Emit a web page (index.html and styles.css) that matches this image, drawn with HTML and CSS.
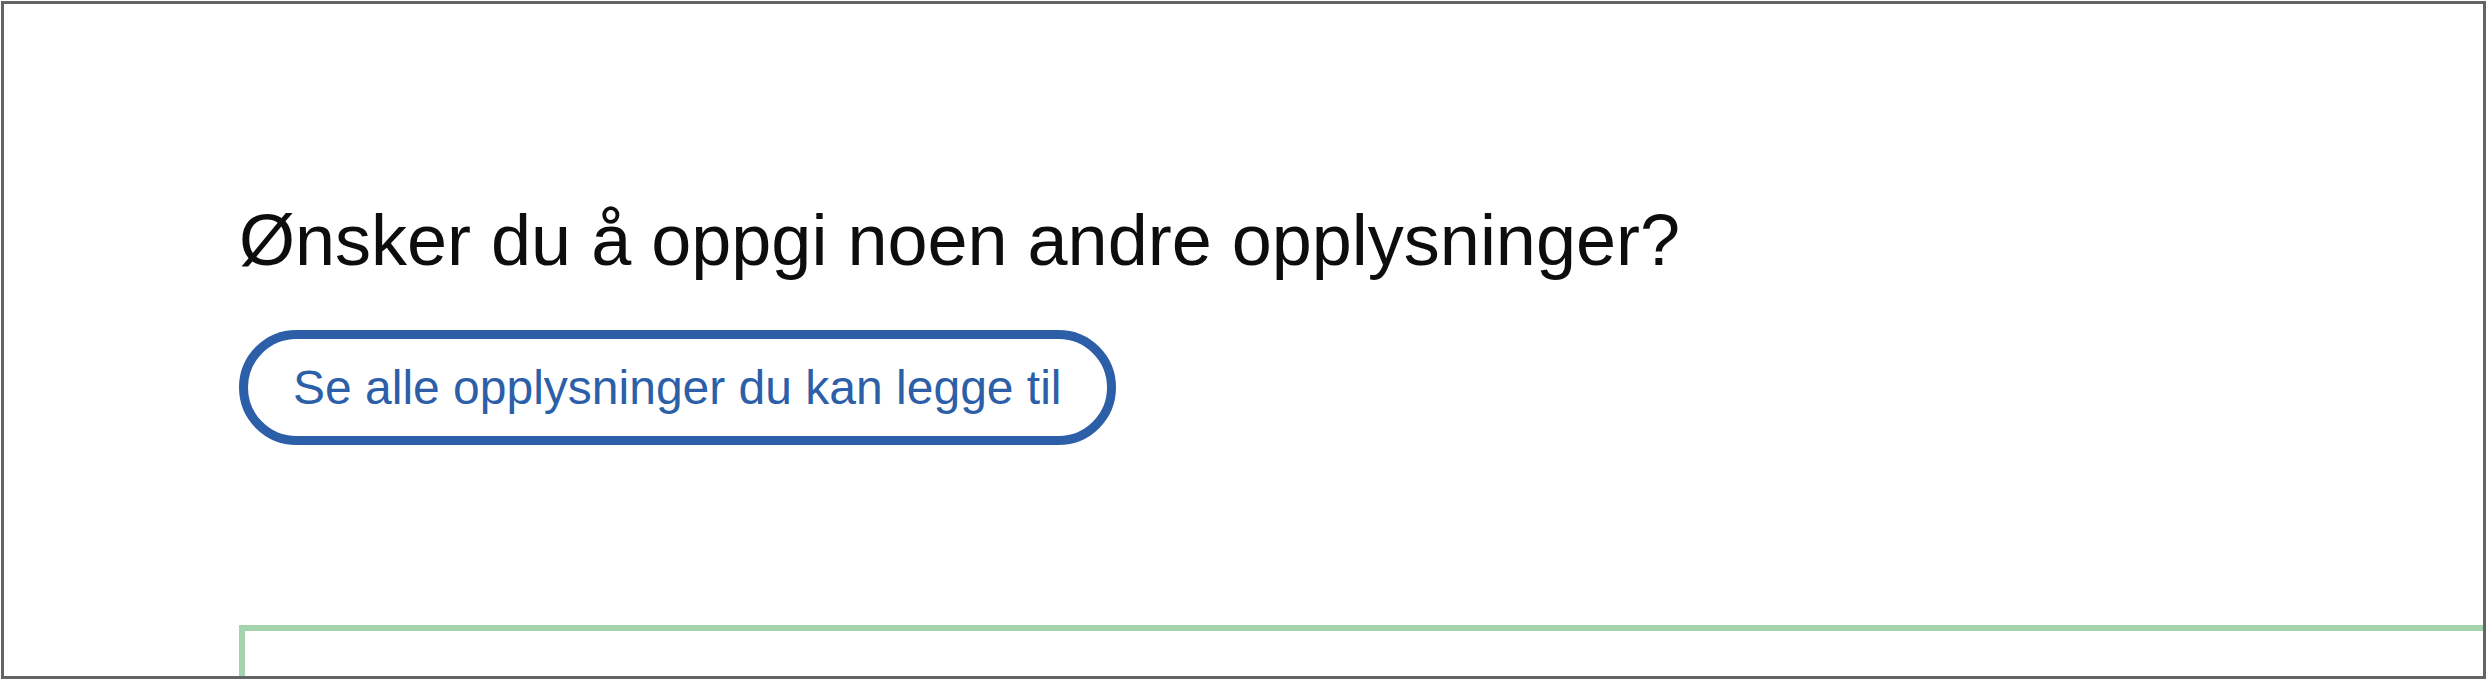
FILE: index.html
```html
<!DOCTYPE html>
<html lang="no">
<head>
<meta charset="utf-8">
<title>Opplysninger</title>
<link rel="stylesheet" href="styles.css">
</head>
<body>
<div class="frame">
  <div class="content">
    <h2 class="question">Ønsker du å oppgi noen andre opplysninger?</h2>
    <div class="actions">
      <button class="pill" type="button">Se alle opplysninger du kan legge til</button>
    </div>
    <div class="panel"></div>
  </div>
</div>
</body>
</html>
```

FILE: styles.css
```css
html, body {
  margin: 0;
  padding: 0;
  background: #ffffff;
}

body {
  font-family: "Liberation Sans", Arial, sans-serif;
  width: 2488px;
  height: 681px;
  overflow: hidden;
}

.frame {
  box-sizing: border-box;
  margin: 1px 2px 0 1px;
  height: 678px;
  border: 3px solid #646464;
  overflow: hidden;
  background: #ffffff;
}

.content {
  display: flex;
  flex-direction: column;
  align-items: flex-start;
  padding: 200px 0 0 235px;
}

.question {
  margin: 0;
  font-size: 72px;
  font-weight: 400;
  line-height: 72px;
  color: #0d0d0d;
}

.actions {
  margin-top: 54px;
}

.pill {
  box-sizing: border-box;
  margin: 0;
  padding: 25px 45px 24px;
  border: 9px solid #2c5fa8;
  border-radius: 60px;
  background: #ffffff;
  color: #2c5fa8;
  font-family: "Liberation Sans", Arial, sans-serif;
  font-size: 48px;
  line-height: 48px;
  cursor: pointer;
}

.panel {
  align-self: stretch;
  margin-top: 180px;
  height: 200px;
  border-top: 6px solid #a3d4ae;
  border-left: 6px solid #a3d4ae;
}
```
